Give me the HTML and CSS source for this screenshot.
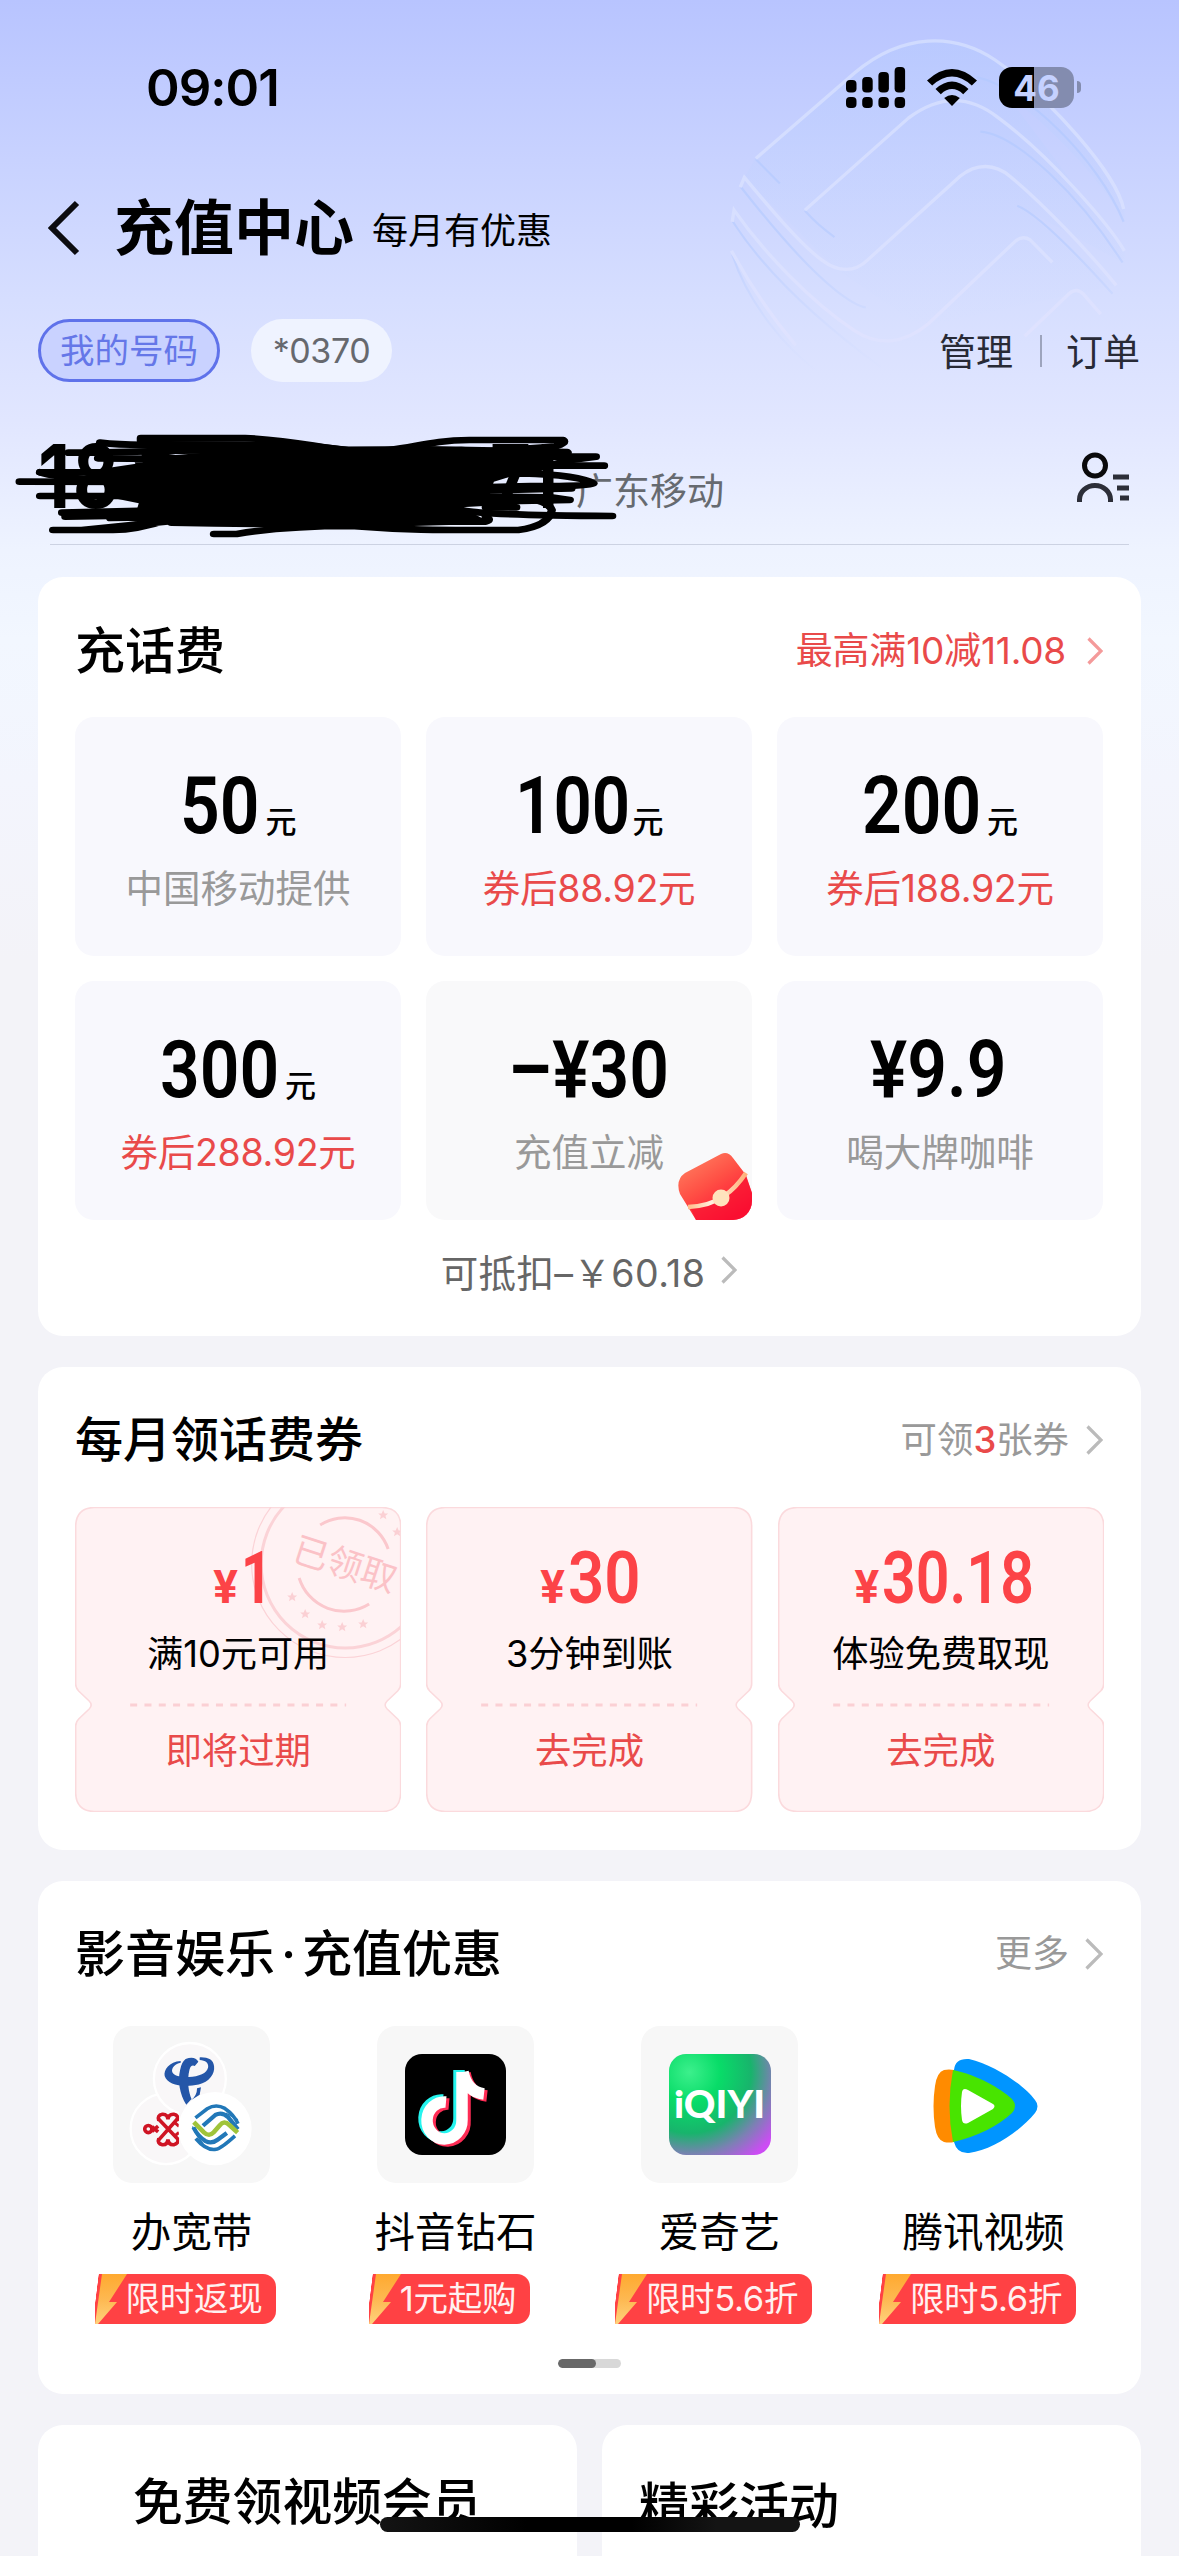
FILE: index.html
```html
<!DOCTYPE html>
<html lang="zh-CN">
<head>
<meta charset="utf-8">
<title>充值中心</title>
<link rel="stylesheet" href="styles.css">
</head>
<body>
<svg class="watermark" viewBox="0 0 1568 1568" preserveAspectRatio="none" fill="none">
  <defs>
    <linearGradient id="wm" gradientUnits="userSpaceOnUse" x1="0" y1="100" x2="0" y2="1050">
      <stop offset="0" stop-color="#d0dbff"/><stop offset=".6" stop-color="#d9e0ff"/><stop offset=".85" stop-color="#dfe2ff"/><stop offset="1" stop-color="#dfe4ff" stop-opacity="0"/>
    </linearGradient>
    <linearGradient id="ws" gradientUnits="userSpaceOnUse" x1="0" y1="300" x2="0" y2="1030">
      <stop offset="0" stop-color="#b6caff"/><stop offset=".5" stop-color="#bfd0ff"/><stop offset="1" stop-color="#d0dcff" stop-opacity="0"/>
    </linearGradient>
    <linearGradient id="wf" gradientUnits="userSpaceOnUse" x1="0" y1="100" x2="0" y2="900">
      <stop offset="0" stop-color="#b4ccff" stop-opacity=".35"/><stop offset="1" stop-color="#c4d8ff" stop-opacity="0"/>
    </linearGradient>
  </defs>
  <path fill="url(#wf)" d="M420 436L700 190Q890 50 1065 165C1200 260 1380 460 1420 560L1420 610C1350 480 1200 330 1100 260L1420 690V725L1140 570L1395 785L870 900L640 740L390 490Z"/>
  <g stroke="url(#ws)" stroke-width="6">
    <path d="M422 438L487 505M555 580Q590 620 635 652M382 515Q540 720 640 800Q690 840 720 846M360 610Q480 800 760 1010M358 700C400 830 500 960 600 1030"/>
    <path d="M1020 212C1150 240 1350 440 1418 610M1030 362C1130 370 1300 540 1415 722M1130 566C1190 590 1310 720 1388 808"/>
  </g>
  <g stroke="url(#wm)" stroke-width="9">
    <path d="M422 436L690 200C820 90 960 90 1070 165C1220 270 1400 480 1418 575"/>
    <path d="M555 578L835 325C920 260 1000 260 1080 325C1220 430 1380 620 1420 690"/>
    <path d="M380 515L391 488C450 560 540 670 600 715C645 750 690 750 725 715L975 485C1020 448 1070 450 1110 485C1200 560 1330 700 1398 785"/>
    <path d="M358 610L363 578C440 690 570 830 690 910C750 950 820 950 890 890L1120 668Q1142 645 1165 660L1225 722"/>
    <path d="M356 690C420 810 480 890 530 950"/>
    <path d="M1150 925L1270 808Q1290 790 1308 808L1356 864"/>
  </g>
</svg>

<header class="header">
  <div class="status">
    <span class="time">09:01</span>
    <div class="indicators">
      <svg class="signal" viewBox="0 0 60 42">
        <rect x="0" y="13" width="10.5" height="12.500" rx="4"/><rect x="16.200" y="10" width="10.500" height="15.500" rx="4"/><rect x="32.400" y="5" width="10.500" height="20.500" rx="4"/><rect x="48.600" y="0" width="10.500" height="25.500" rx="4"/>
        <rect x="0" y="30" width="10.500" height="11" rx="4"/><rect x="16.200" y="30" width="10.500" height="11" rx="4"/><rect x="32.400" y="30" width="10.500" height="11" rx="4"/><rect x="48.600" y="30" width="10.500" height="11" rx="4"/>
      </svg>
      <svg class="wifi" viewBox="0 0 50 38">
        <path d="M0 11.500Q25-11.500 50 11.500L44.800 16.500Q25-1.500 5.200 16.500Z"/>
        <path d="M8.500 20Q25 5 41.500 20L36.200 25.200Q25 15 13.800 25.200Z"/>
        <path d="M17.200 29Q25 23 32.800 29L25 37Z"/>
      </svg>
      <div class="battery"><span>46</span></div>
    </div>
  </div>

  <div class="nav">
    <svg class="back" viewBox="0 0 32 56"><path d="M29 3L4 28L29 53"/></svg>
    <h1>充值中心</h1>
    <span class="slogan">每月有优惠</span>
  </div>

  <div class="accounts">
    <span class="pill pill-on">我的号码</span>
    <span class="pill">*0370</span>
    <div class="links"><span>管理</span><i></i><span>订单</span></div>
  </div>

  <div class="phone">
    <div class="number"><span class="d1">1</span><span class="d2">8</span><span class="d3">71</span>
      <svg class="scribble" viewBox="0 0 1568 390" preserveAspectRatio="none">
        <path fill="#000" d="M340 62L720 66L860 95L1130 80L1290 92L1380 100L1290 155L1210 185L1200 220L1230 255L1130 262L1190 300L880 322L420 312L330 290L340 250L280 235L230 150L350 128L345 90L430 105L560 92L380 85Z"/>
        <g fill="none" stroke="#000" stroke-width="20" stroke-linecap="round" stroke-linejoin="round">
          <path d="M345 62V54H600C720 62 760 78 860 92C1000 100 1020 62 1150 60H1380Q1390 68 1360 80L1000 110"/>
          <path d="M245 68Q300 76 380 74H700Q760 76 860 92"/>
          <path d="M168 98H230L440 92L1050 88L1390 96Q1400 104 1300 110H1460L1400 120L1300 150"/>
          <path d="M98 157H300L1180 137H1480"/><path d="M48 185L400 186L1280 160Q1420 165 1454 190Q1440 200 1300 198L300 228H98"/>
          <path d="M98 157Q130 172 250 180"/>
          <path d="M240 115L560 118L340 125L900 115L1300 112L800 130"/>
          <path d="M152 278L420 270L1180 230L1350 232L1396 240L1200 245"/>
          <path d="M160 290L1130 270Q1180 286 1500 288"/>
          <path d="M130 330H200L430 302M270 294Q350 290 410 300Q330 332 270 330H130"/>
          <path d="M524 342H580Q700 318 860 318C1000 332 1100 330 1270 330Q1345 318 1352 270Q1340 236 1260 232"/>
          <path d="M420 308Q800 318 1100 305H1190Q1206 300 1190 290"/>
          <path d="M1080 215L1400 205M1190 262H1265"/>
        </g>
      </svg>
    </div>
    <span class="carrier">广东移动</span>
    <svg class="contacts" viewBox="0 0 52 51" fill="none" stroke-width="5">
      <circle cx="18" cy="13.500" r="10.500" stroke="#0a0a0c"/>
      <path stroke="#2c2e38" d="M2.500 50V47.500A15.500 14 0 0 1 33.500 47.500V50M36 25H52M40 36H52M43 46H52"/>
    </svg>
  </div>
</header>

<main class="content">
  <section class="card topup">
    <div class="head"><h2>充话费</h2><span class="more red">最高满10减11.08<svg class="chev c1" viewBox="0 0 16 28"><path d="M1.500 1.500L14 14L1.500 26.500"/></svg></span></div>
    <div class="grid">
      <div class="cell"><p class="amount"><b class="w2"><span>50</span></b><em>元</em></p><p class="sub">中国移动提供</p></div>
      <div class="cell"><p class="amount"><b class="w3 lead"><span>100</span></b><em>元</em></p><p class="sub red">券后88.92元</p></div>
      <div class="cell"><p class="amount"><b class="w3"><span>200</span></b><em>元</em></p><p class="sub red">券后188.92元</p></div>
      <div class="cell"><p class="amount"><b class="w3"><span>300</span></b><em>元</em></p><p class="sub red">券后288.92元</p></div>
      <div class="cell plain"><p class="amount"><b class="w4"><span>–¥30</span></b></p><p class="sub">充值立减</p>
        <svg class="envelope" viewBox="0 0 74 67">
          <defs><linearGradient id="env" x1="0" y1="0" x2=".7" y2="1"><stop offset="0" stop-color="#ff8a66"/><stop offset=".5" stop-color="#ff5045"/><stop offset="1" stop-color="#ff0f33"/></linearGradient>
          <linearGradient id="band" x1="0" y1="0" x2="1" y2="0"><stop offset="0" stop-color="#ffbd8a"/><stop offset=".4" stop-color="#fff0de"/><stop offset="1" stop-color="#ffb07a"/></linearGradient></defs>
          <path fill="url(#env)" d="M7 20Q26 10 43 1Q50-2 55 5L68 22L74 40V67H18L2 41Q-3 27 7 20Z"/>
          <path fill="#f60f30" opacity=".6" d="M12 54Q32 55 45 45Q60 35 67 21L74 40V67H18Z"/>
          <path fill="none" stroke="url(#band)" stroke-width="4.500" d="M10 54Q32 53 46 43Q58 35 68 20"/>
          <circle cx="43" cy="45" r="8.500" fill="#ffe3bd"/>
        </svg>
      </div>
      <div class="cell"><p class="amount"><b class="w5"><span>¥9.9</span></b></p><p class="sub">喝大牌咖啡</p></div>
    </div>
    <div class="deduct">可抵扣–￥60.18<svg class="chev c2" viewBox="0 0 16 28"><path d="M1.500 1.500L14 14L1.500 26.500"/></svg></div>
  </section>

  <section class="card coupons">
    <div class="head"><h2>每月领话费券</h2><span class="more">可领<strong>3</strong>张券<svg class="chev c3" viewBox="0 0 17 30"><path d="M1.500 1.500L15 15L1.500 28.500"/></svg></span></div>
    <div class="grid tickets">
      <div class="ticket">
        <svg class="shape" viewBox="0 0 326 305"><path d="M19 .5H307Q325.500 1 325.500 19V177Q325.500 181 322.500 184L312 194Q308 198 312 202L322.500 212Q325.500 215 325.500 219V286Q325 304.500 307 304.500H19Q1 304 .5 286V219Q.5 215 3.500 212L14 202Q18 198 14 194L3.500 184Q.5 181 .5 177V19Q1 1 19 .5Z"/><path class="dash" d="M55 198H271"/></svg>
        <svg class="stamp" viewBox="0 0 326 305">
          <defs><clipPath id="tk"><rect width="325" height="305" rx="18"/></clipPath>
          <path id="star" d="M0-5L1.500-1.600L5-1.500L2.300.8L3.200 4.300L0 2.300L-3.200 4.300L-2.300.8L-5-1.500L-1.500-1.600Z"/></defs>
          <g clip-path="url(#tk)" fill="none" stroke="#fbd3d7">
            <circle cx="270" cy="57" r="93.500" stroke-width="1.200"/><circle cx="270" cy="57" r="84" stroke-width="3"/>
            <path stroke="#fbc8cd" stroke-width="3" d="M245 18A46 47 0 0 1 313 42M224 71A47 47 0 0 0 294 97"/>
            <g fill="#fbd0d4" stroke="none"><use href="#star" x="217" y="90"/><use href="#star" x="230" y="107"/><use href="#star" x="247" y="118"/><use href="#star" x="267" y="120"/><use href="#star" x="288" y="117"/><use href="#star" x="308" y="8"/><use href="#star" x="322" y="25"/></g>
          </g>
          <text class="done" transform="rotate(18 270 57)" x="270" y="70">已领取</text>
        </svg>
        <p class="price heavy"><i>¥</i><b class="p1"><span>1</span></b></p><p class="cond">满10元可用</p><p class="act">即将过期</p>
      </div>
      <div class="ticket">
        <svg class="shape" viewBox="0 0 326 305"><path d="M19 .5H307Q325.500 1 325.500 19V177Q325.500 181 322.500 184L312 194Q308 198 312 202L322.500 212Q325.500 215 325.500 219V286Q325 304.500 307 304.500H19Q1 304 .5 286V219Q.5 215 3.500 212L14 202Q18 198 14 194L3.500 184Q.5 181 .5 177V19Q1 1 19 .5Z"/><path class="dash" d="M55 198H271"/></svg>
        <p class="price"><i>¥</i><b class="p2"><span>30</span></b></p><p class="cond">3分钟到账</p><p class="act">去完成</p>
      </div>
      <div class="ticket">
        <svg class="shape" viewBox="0 0 326 305"><path d="M19 .5H307Q325.500 1 325.500 19V177Q325.500 181 322.500 184L312 194Q308 198 312 202L322.500 212Q325.500 215 325.500 219V286Q325 304.500 307 304.500H19Q1 304 .5 286V219Q.5 215 3.500 212L14 202Q18 198 14 194L3.500 184Q.5 181 .5 177V19Q1 1 19 .5Z"/><path class="dash" d="M55 198H271"/></svg>
        <p class="price"><i>¥</i><b class="p3"><span>30.18</span></b></p><p class="cond">体验免费取现</p><p class="act">去完成</p>
      </div>
    </div>
  </section>

  <section class="card media">
    <div class="head"><h2>影音娱乐<span class="dot">·</span>充值优惠</h2><span class="more">更多<svg class="chev c4" viewBox="0 0 18 32"><path d="M1.500 1.500L16 16L1.500 30.500"/></svg></span></div>
    <div class="apps">
      <div class="app">
        <svg class="tile" viewBox="0 0 480 474">
          <g stroke="#fff" stroke-width="7" fill="#f9f7f8"><circle cx="162" cy="311" r="108"/><circle cx="235" cy="159" r="110"/></g>
          <g fill="none" stroke="#cf1424" stroke-width="11">
            <circle cx="108" cy="312" r="11"/><path d="M119 305L138 321M119 319L138 303"/>
            <path d="M140 282L200 345M196 282L140 345"/>
            <path d="M168 282Q166 266 151 267Q134 270 140 286M168 282Q170 266 186 267Q202 270 196 286M168 344Q166 361 151 360Q134 356 140 341M168 344Q170 361 186 360Q202 356 198 341"/>
            <path d="M188 292L202 304M188 334L202 322" stroke-width="9"/>
          </g>
          <path fill="#f9f7f8" d="M202 250h10v120h-10z"/>
          <circle cx="312" cy="311" r="112" fill="#fff"/>
          <g fill="#2456a8"><path d="M207 104C172 106 154 132 158 150C166 178 215 186 262 176C294 168 312 144 309 120C307 100 290 92 265 93V101C283 102 292 110 291 122C288 142 262 151 232 153C205 154 184 149 181 137C178 125 190 112 207 109Z"/>
          <path d="M222 98Q250 88 261 106L250 119Q238 114 234 130C225 165 232 203 240 220L224 238C204 205 197 165 205 132Q209 108 222 98Z"/><path d="M269 184L265 207L238 224Q257 210 257 187Z"/></g>
          <g fill="none" stroke-width="11"><g stroke="#2278b8">
            <path d="M252 278L288 250Q315 234 342 249Q371 269 382 296"/><path d="M275 302L313 269Q333 258 352 276L382 313" stroke-width="13"/><path d="M246 307Q260 335 283 349Q302 359 321 344L348 324" stroke-width="13"/><path d="M253 341Q285 379 315 374Q330 372 373 333"/></g>
            <path stroke="#a0c43a" stroke-width="14" d="M247 291L278 322Q294 337 308 322L326 301Q340 284 355 299L381 323"/>
            <path stroke="#2278b8" stroke-width="4" d="M243 304Q256 335 276 357M382 284L345 263"/></g>
        </svg>
        <p class="name">办宽带</p>
        <p class="tag"><svg viewBox="0 0 32 50"><path fill="url(#bolt)" d="M7 0H32L14 28H22L3 50H0Z"/></svg>限时返现</p>
      </div>
      <div class="app">
        <svg class="tile" viewBox="0 0 157 157">
          <rect x="28" y="28" width="101" height="101" rx="17" fill="#000"/>
          <g fill="none" stroke-width="11.500"><path stroke="#25f4ee" d="M82 44V92A17.500 18.500 0 1 1 66 74"/><path stroke="#fe2c55" d="M88 48V95A17.500 18.500 0 1 1 72 78M88 47Q92 68 110 70"/><path stroke="#fff" d="M85 46V94A17.500 18.500 0 1 1 69 76M86 46Q90 66 107 68"/></g>
        </svg>
        <p class="name">抖音钻石</p>
        <p class="tag"><svg viewBox="0 0 32 50"><path fill="url(#bolt)" d="M7 0H32L14 28H22L3 50H0Z"/></svg>1元起购</p>
      </div>
      <div class="app">
        <svg class="tile" viewBox="0 0 157 157">
          <defs><radialGradient id="iq" cx=".2" cy=".18" r="1.080"><stop offset="0" stop-color="#3cf08c"/><stop offset=".28" stop-color="#08dc68"/><stop offset=".56" stop-color="#18b46c"/><stop offset=".76" stop-color="#7c80b4"/><stop offset=".96" stop-color="#cc4cf4"/></radialGradient>
          <linearGradient id="bolt" x1="0" y1="0" x2="0" y2="1"><stop offset="0" stop-color="#ffa92f"/><stop offset=".5" stop-color="#fdb851"/><stop offset="1" stop-color="#ffd27c"/></linearGradient></defs>
          <rect x="28" y="28" width="102" height="101" rx="17" fill="url(#iq)"/>
          <text class="iqiyi" x="33" y="92" textLength="91" lengthAdjust="spacingAndGlyphs">iQIYI</text>
        </svg>
        <p class="name">爱奇艺</p>
        <p class="tag"><svg viewBox="0 0 32 50"><path fill="url(#bolt)" d="M7 0H32L14 28H22L3 50H0Z"/></svg>限时5.6折</p>
      </div>
      <div class="app">
        <svg class="tile clear" viewBox="0 0 157 157">
          <path fill="#0095ff" d="M49 44Q50 32 64 33C90 39 120 60 130 74Q135 80 130 87C115 105 88 124 64 127Q52 128 49 116Z"/>
          <path fill="#ff8b00" d="M49 44Q44 43 39 44Q32 46 30 60Q27 80 30 101Q32 114 39 116Q44 117 49 116Z"/>
          <path fill="#48e400" d="M48 44C72 49 95 62 107 73Q113 80 107 87C94 99 72 111 48 116Q41 80 48 44Z"/>
          <path fill="#fff" d="M57 66Q58 61 63 64L88 78Q91 80 88 83L63 97Q58 99 57 94Q55 80 57 66Z"/>
        </svg>
        <p class="name">腾讯视频</p>
        <p class="tag"><svg viewBox="0 0 32 50"><path fill="url(#bolt)" d="M7 0H32L14 28H22L3 50H0Z"/></svg>限时5.6折</p>
      </div>
    </div>
    <div class="pager"><i></i></div>
  </section>

  <div class="pair">
    <section class="card"><h2 class="vip">免费领视频会员</h2></section>
    <section class="card"><h2 class="act-title">精彩活动</h2></section>
  </div>
</main>
<div class="home-bar"></div>
</body>
</html>
```
FILE: styles.css
```css
* { box-sizing: border-box; margin: 0; padding: 0; }
html, body { width: 1179px; height: 2556px; overflow: hidden; }
body {
  position: relative;
  font-family: "Inter", "Noto Sans CJK SC", sans-serif;
  color: #000;
  white-space: nowrap;
  background: linear-gradient(180deg, #b8c4ff 0, #c8d2ff 160px, #d6deff 300px, #e1e6ff 420px, #eef3ff 550px, #f2f7ff 640px, #f3f5fd 780px, #f3f3f8 960px);
}
i, em { font-style: normal; }
svg { display: block; flex: none; }

.watermark { position: absolute; left: 600px; top: 0; width: 579px; height: 570px; }
.header { position: relative; height: 577px; }

.status { display: flex; justify-content: space-between; height: 174px; padding: 0 99px 0 146px; }
.time { font-size: 51px; font-weight: 600; line-height: 175px; letter-spacing: -1px; }
.indicators { display: flex; align-items: flex-start; padding-top: 67px; }
.signal { width: 60px; height: 42px; margin-right: 21px; }
.wifi { width: 50px; height: 38px; margin: 2px 22px 0 0; }
.battery {
  position: relative; width: 75px; height: 41px; margin-right: 6px;
  border-radius: 13px; color: #c5d1ff;
  font-size: 35px; font-weight: 700; line-height: 42px; text-align: center;
  background: linear-gradient(90deg, #000 35px, #838caf 35px);
}
.battery::after {
  content: ""; position: absolute; left: 78px; top: 14px;
  width: 4px; height: 12px; border-radius: 0 4px 4px 0; background: #838caf;
}

.nav { display: flex; align-items: center; height: 108px; padding-left: 48px; }
.back { width: 32px; height: 56px; margin-right: 34px; }
.back path { fill: none; stroke: #0c0c10; stroke-width: 6; }
.nav h1 { font-size: 60px; font-weight: 700; line-height: 80px; width: 258px; }
.slogan { font-size: 36px; line-height: 50px; padding-top: 6px; }

.accounts { display: flex; align-items: center; margin-top: 37px; padding: 0 39px 0 38px; height: 63px; }
.pill {
  height: 63px; width: 141px; border-radius: 32px; background: #eff3ff;
  color: #66686e; font-size: 34px; line-height: 64px; text-align: center; letter-spacing: -0.4px;
}
.pill-on {
  width: 182px; margin-right: 31px; border: 3px solid #5f72ea;
  background: #c9d2ff; color: #6577e8; line-height: 57px; font-size: 34.5px; letter-spacing: 0;
}
.links { display: flex; align-items: center; height: 61px; margin: 0 0 2px auto; font-size: 37px; color: #282a36; }
.links i { width: 2px; height: 32px; margin: 2px 24px 0 27px; background: #9da4bd; }

.phone {
  position: relative; display: flex; height: 163px; margin: 0 50px;
  border-bottom: 1px solid #ccd2e2;
}
.number { width: 526px; font-size: 88px; font-weight: 700; line-height: 90px; letter-spacing: -4px; position: relative; }
.number .d1 { position: absolute; left: -12px; top: 49px; transform: scaleX(.85); transform-origin: left; }
.number .d2 { position: absolute; left: 23px; top: 49px; transform: scaleX(.8); transform-origin: left; }
.number .d3 { position: absolute; left: 440px; top: 49px; transform: scaleX(.8); transform-origin: left; }
.scribble { position: absolute; left: -50px; top: 38px; width: 640px; height: 130px; }
.carrier { padding-top: 84px; font-size: 37px; line-height: 52px; color: #666a70; }
.contacts { width: 52px; height: 51px; margin: 70px 0 0 auto; }

.content { display: flex; flex-direction: column; gap: 31px; padding: 0 38px; position: relative; }
.card { background: #fff; border-radius: 25px; overflow: hidden; }
.head { display: flex; justify-content: space-between; align-items: center; height: 60px; }
h2 { font-size: 50px; font-weight: 500; line-height: 60px; }
.more { display: flex; align-items: center; color: #999; font-size: 37px; line-height: 50px; }
.red { color: #e94a4a; }
.chev path { fill: none; stroke: #bbb; stroke-width: 3.2; }
.red .chev path { stroke: #f49a9a; }
.c1 { width: 16px; height: 28px; margin-left: 21px; }
.c2 { width: 16px; height: 28px; margin-left: 16px; }
.c3 { width: 17px; height: 30px; margin: 0 1px 0 17px; }
.c4 { width: 18px; height: 32px; margin: 0 1px 0 16px; }

.topup { height: 759px; padding: 44px 38px 0 37px; }
.topup .more { letter-spacing: -0.2px; }
.grid { display: grid; grid-template-columns: repeat(3, 1fr); gap: 25px; }
.topup .grid { margin-top: 36px; }
.cell { position: relative; height: 239px; padding-top: 49px; border-radius: 19px; background: #f8f8fd; text-align: center; overflow: hidden; }
.plain { background: #f9f9fa; }
.amount { display: flex; justify-content: center; align-items: baseline; height: 80px; }
.amount b, .price b { display: block; font-family: Roboto, sans-serif; font-weight: 600; text-align: left; }
.amount b { font-size: 80px; line-height: 80px; }
.amount b span, .price b span { display: inline-block; transform: scaleX(.87); transform-origin: left; }
.w2 { width: 82px; } .w3 { width: 121px; } .w4 { width: 163px; } .w5 { width: 140px; }
.amount .lead { width: 114px; }
.amount .lead span { transform: scaleX(.84); }
.amount em { font-size: 31px; font-weight: 500; line-height: 31px; margin-left: 4px; }
.sub { margin-top: 19px; font-size: 37.5px; line-height: 48px; color: #999; }
.sub.red { color: #e94a4a; letter-spacing: -0.3px; }
.envelope { position: absolute; right: 0; bottom: 0; width: 74px; height: 67px; }
.deduct { display: flex; justify-content: center; align-items: center; margin-top: 25px; height: 50px; font-size: 37.5px; letter-spacing: 0.4px; color: #666; }

.coupons { height: 483px; padding: 43px 37px 0; }
.coupons h2 { font-size: 48px; }
.coupons .more { font-size: 36.4px; }
.more strong { font-weight: 500; color: #e94a4a; }
.tickets { margin-top: 37px; }
.ticket { position: relative; height: 305px; padding-top: 35px; text-align: center; }
.shape, .stamp { position: absolute; left: 0; top: 0; width: 100%; height: 305px; }
.shape path { fill: #fff2f3; stroke: #fbdadd; stroke-width: 1.6; }
.shape .dash { stroke: #fbd0d4; stroke-width: 3; stroke-dasharray: 7 7.300; }
.done { font-size: 35.5px; fill: #fbc2c7; stroke: none; text-anchor: middle; }
.price, .cond, .act { position: relative; }
.price { display: flex; justify-content: center; align-items: baseline; height: 72px; color: #fc4347; font-family: Roboto, sans-serif; }
.price i { font-size: 46px; font-weight: 700; line-height: 46px; margin-right: 3px; }
.price b { font-size: 73px; line-height: 72px; }
.price .p1 { width: 22px; font-weight: 700; }
.price .p1 span { transform: scaleX(.74); }
.p2 { width: 71px; }
.p3 { width: 145px; }
.price .p3 span { transform: scaleX(.81); }
.cond { margin-top: 15px; font-size: 36.2px; line-height: 50px; }
.act { margin-top: 47px; font-size: 36.4px; line-height: 50px; color: #e94a4a; }

.media { height: 513px; padding: 43px 37px 0; }
.dot { display: inline-block; width: 27px; text-align: center; }
.apps { display: grid; grid-template-columns: repeat(4, 264px); margin: 42px -15.500px 0; }
.app { display: flex; flex-direction: column; align-items: center; }
.tile { width: 157px; height: 157px; border-radius: 19px; background: #f7f7f7; }
.clear { background: none; }
.name { margin-top: 24px; font-size: 40.500px; line-height: 52px; }
.tag {
  position: relative; height: 50px; margin: 15px 12px 0 0; padding: 0 14px 0 31px;
  border-radius: 0 13px 13px 0; color: #fff1f1; font-size: 34.500px; letter-spacing: -0.3px; line-height: 49px;
  background: linear-gradient(97deg, transparent 3.500px, #ff4144 4px);
}
.tag svg { position: absolute; left: 0; top: 0; width: 32px; height: 50px; }
.iqiyi { font-family: Lato, sans-serif; font-weight: 900; font-size: 38px; fill: #fff; }
.pager { width: 63px; height: 9px; margin: 35px auto 0; border-radius: 5px; background: #d8d8d8; overflow: hidden; }
.pager i { display: block; width: 38px; height: 9px; border-radius: 5px; background: #686868; }

.pair { display: grid; grid-template-columns: 1fr 1fr; gap: 25px; }
.pair .card { height: 150px; border-radius: 25px 25px 0 0; }
.vip { margin: 47px 0 0 95px; font-size: 49.800px; }
.act-title { margin: 51px 0 0 37px; font-size: 50px; }

.home-bar { position: absolute; left: 380px; top: 2517px; width: 420px; height: 15px; border-radius: 8px; background: linear-gradient(90deg, #141414, #000 35%, #000 60%, #141414 80%); }
```
